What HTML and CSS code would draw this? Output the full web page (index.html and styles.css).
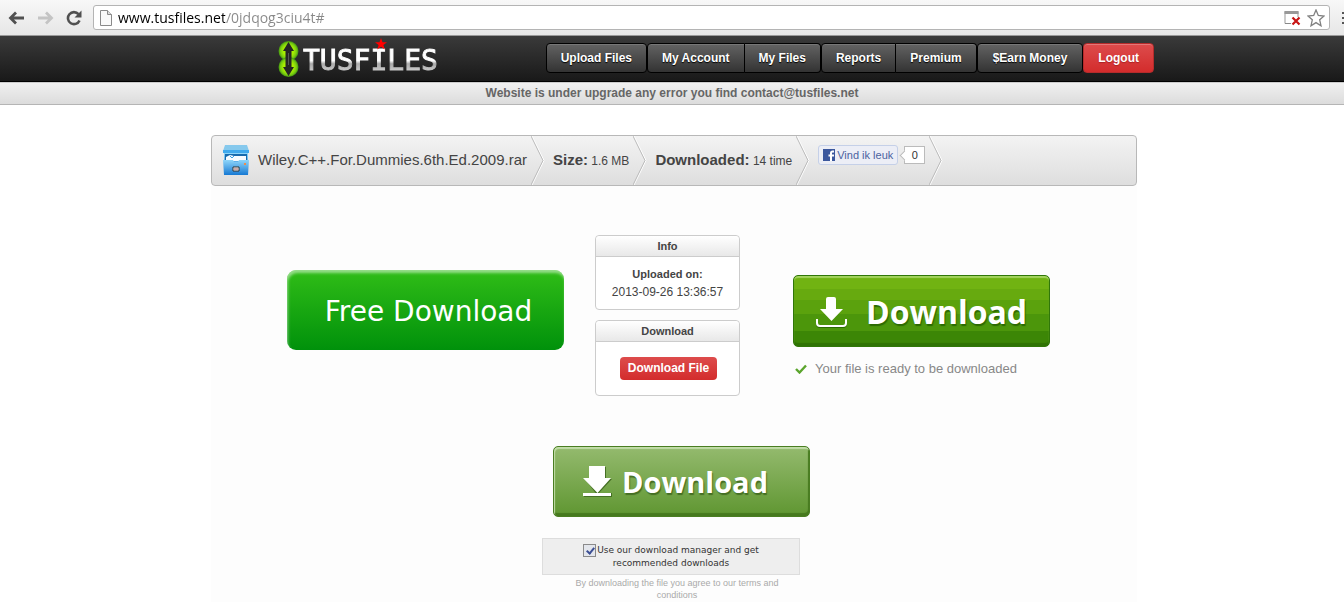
FILE: index.html
```html
<!DOCTYPE html>
<html lang="en">
<head>
  <meta charset="utf-8">
  <title>TusFiles - Download</title>
  <link rel="stylesheet" href="styles.css">
</head>
<body>
  <div class="toolbar">
    <button class="tool" aria-label="Back">
      <svg width="17" height="14" viewBox="0 0 17 14"><path d="M16 7H3M8 1.500L2.500 7L8 12.500" fill="none" stroke="#505050" stroke-width="2.800"/></svg>
    </button>
    <button class="tool" aria-label="Forward" disabled>
      <svg width="17" height="14" viewBox="0 0 17 14"><path d="M1 7H14M9 1.500L14.500 7L9 12.500" fill="none" stroke="#c4c4c4" stroke-width="2.800"/></svg>
    </button>
    <button class="tool" aria-label="Reload">
      <svg width="17" height="16" viewBox="0 0 17 16"><path d="M13.500 10.500A6 6 0 1 1 12.500 4.200" fill="none" stroke="#505050" stroke-width="2.600"/><path d="M15.500 0.500V7.500H8.500Z" fill="#505050"/></svg>
    </button>
    <div class="address">
      <svg width="12" height="16" viewBox="0 0 12 16"><path d="M.5.500H7.500L11.500 4.500V15.500H.5Z" fill="#fafafa" stroke="#8a8a8a"/><path d="M7.500.500V4.500H11.500" fill="#ddd" stroke="#8a8a8a"/></svg>
      <input type="text" class="url" aria-label="Address" value="www.tusfiles.net/0jdqog3ciu4t#">
      <svg width="17" height="16" viewBox="0 0 17 16"><path d="M1 13.500V1.500H14V7" fill="none" stroke="#999"/><path d="M.5 1H14.500V4H.5Z" fill="#999"/><path d="M1 13.500H7" stroke="#888"/><path d="M8.500 7.500L15.500 14.500M15.500 7.500L8.500 14.500" stroke="#c81414" stroke-width="2.200"/></svg>
      <svg width="18" height="18" viewBox="0 0 18 18"><path d="M9 1L11.300 6.500L17 7L12.700 10.800L14 16.800L9 13.600L4 16.800L5.300 10.800L1 7L6.700 6.500Z" fill="#fff" stroke="#808080" stroke-width="1.300"/></svg>
    </div>
    <svg class="menu-icon" width="2" height="14" viewBox="0 0 2 14"><path d="M0 2H4M0 7H4M0 12H4" stroke="#555" stroke-width="2"/></svg>
  </div>

  <header class="header">
    <div class="header-inner">
      <a class="logo" href="#">
        <svg width="21" height="36" viewBox="0 0 21 36">
          <defs>
            <radialGradient id="green"><stop offset="0.500" stop-color="#a8f000"/><stop offset="0.800" stop-color="#79cc10"/><stop offset="1" stop-color="#3f9012"/></radialGradient>
          </defs>
          <circle cx="10.500" cy="10" r="10" fill="url(#green)"/>
          <circle cx="10.500" cy="26" r="10" fill="url(#green)"/>
          <path d="M10.500 1L16 10H13.500V26H16L10.500 35L5 26H7.500V10H5Z" fill="#252525"/>
          <path d="M10.500 12V24" stroke="#555"/>
        </svg>
        <span class="logo-text">TUSFILES</span>
        <svg class="star" width="12" height="12" viewBox="0 0 12 12"><path d="M6 0L7.500 4.200H12L8.400 6.900L9.800 11.500L6 8.800L2.200 11.500L3.600 6.900L0 4.200H4.500Z" fill="#f00"/></svg>
      </a>
      <nav class="nav">
        <a href="#" class="round">Upload Files</a>
        <a href="#" class="round-left">My Account</a>
        <a href="#" class="round-right">My Files</a>
        <a href="#" class="round-left">Reports</a>
        <a href="#" class="round-right">Premium</a>
        <a href="#" class="round">$Earn Money</a>
        <a href="#" class="round logout">Logout</a>
      </nav>
    </div>
  </header>
  <div class="notice">Website is under upgrade any error you find contact@tusfiles.net</div>

  <main class="page">
    <div class="file-bar">
      <svg class="file-icon" width="28" height="32" viewBox="0 0 28 32">
        <defs>
          <linearGradient id="blue" x2="0" y2="1"><stop offset="0" stop-color="#8fd6fa"/><stop offset="1" stop-color="#1679d3"/></linearGradient>
        </defs>
        <path d="M3 1H25L27 7H1Z" fill="#86c9ed"/>
        <path d="M1 6H27V9H1Z" fill="#3fa9ed"/>
        <path d="M2 9H26V30H2Z" fill="url(#blue)"/>
        <path d="M3 10H25V16H3Z" fill="#166aae"/>
        <path d="M4 13L8 11L12 12L17 12H24V17H4Z" fill="#f6fbff"/>
        <path d="M8 12L10 14L12 12" fill="none" stroke="#38a1e8"/>
        <path d="M1 16H11L12 18H16L17 16H27L26 31H2Z" fill="url(#blue)"/>
        <path d="M11 23H17V27H11Z" fill="#fff" stroke="#333"/>
        <path d="M12 25H16" stroke="#955"/>
        <path d="M23 19V21" stroke="#ef8b4c" stroke-width="2"/>
      </svg>
      <span class="file-name">Wiley.C++.For.Dummies.6th.Ed.2009.rar</span>
      <svg class="chevron" viewBox="0 0 14 49"><path d="M1 0L13 24.500L1 49" fill="none" stroke="#fff"/><path d="M0 0L12 24.500L0 49" fill="none" stroke="#bbb"/></svg>
      <span><b>Size:</b> 1.6 MB</span>
      <svg class="chevron" viewBox="0 0 14 49"><path d="M1 0L13 24.500L1 49" fill="none" stroke="#fff"/><path d="M0 0L12 24.500L0 49" fill="none" stroke="#bbb"/></svg>
      <span><b>Downloaded:</b> 14 time</span>
      <svg class="chevron" viewBox="0 0 14 49"><path d="M1 0L13 24.500L1 49" fill="none" stroke="#fff"/><path d="M0 0L12 24.500L0 49" fill="none" stroke="#bbb"/></svg>
      <div class="like">
        <button class="like-btn">
          <svg width="12" height="12" viewBox="0 0 12 12"><path d="M0 0H12V12H0Z" fill="#3b579d"/><path d="M11 2.500H9.500Q8 2.500 8 4V12M5.500 6.500H11" fill="none" stroke="#fff" stroke-width="2"/></svg>
          Vind ik leuk
        </button>
        <span class="like-count">0</span>
      </div>
      <svg class="chevron" viewBox="0 0 14 49"><path d="M1 0L13 24.500L1 49" fill="none" stroke="#fff"/><path d="M0 0L12 24.500L0 49" fill="none" stroke="#bbb"/></svg>
    </div>

    <div class="downloads">
      <button class="free-btn">Free Download</button>
      <div class="boxes">
        <section class="box">
          <h2>Info</h2>
          <p class="uploaded"><b>Uploaded on:</b><br>2013-09-26 13:36:57</p>
        </section>
        <section class="box">
          <h2>Download</h2>
          <button class="file-btn">Download File</button>
        </section>
      </div>
      <div class="ready">
        <button class="ad-btn ad-striped">
          <svg width="32" height="33" viewBox="0 0 32 33"><path d="M10 4Q10 2 12 2H18Q20 2 20 4V14H27L15.500 26L4 14H10Z" fill="#fff"/><path d="M1 25V29Q1 32 4 32H27Q30 32 30 29V25" fill="none" stroke="#2c6a03" stroke-width="2"/><path d="M1 24V28Q1 31 4 31H27Q30 31 30 28V24" fill="none" stroke="#fff" stroke-width="2"/></svg>
          Download
        </button>
        <p class="ready-text">
          <svg width="12" height="10" viewBox="0 0 12 10"><path d="M1 5L4.500 8.500L11 1.500" fill="none" stroke="#5ba52d" stroke-width="2.400"/></svg>
          Your file is ready to be downloaded
        </p>
      </div>
    </div>

    <div class="manager">
      <button class="ad-btn ad-soft">
        <svg width="29" height="31" viewBox="0 0 29 31"><path d="M8 1H23V13H29L16 27H29V31H1V29H14L2 13H8Z" fill="#456f24"/><path d="M6 0H22V12H28L14.500 27L0 12H6Z" fill="#fff"/><path d="M0 27H28V30H0Z" fill="#fff"/></svg>
        Download
      </button>
      <div class="agree">
        <input type="checkbox" id="manager" checked><label for="manager">Use our download manager and get recommended downloads</label>
      </div>
      <p class="terms">By downloading the file you agree to our terms and conditions</p>
    </div>
  </main>
</body>
</html>
```

FILE: styles.css
```css
* {
  box-sizing: border-box;
}

body {
  margin: 0;
  font-family: "Liberation Sans", Arial, sans-serif;
  font-size: 12px;
  color: #444;
  background-color: #fff;
}

button {
  font-family: inherit;
  cursor: pointer;
}

svg {
  flex-shrink: 0;
}

h2,
p {
  margin: 0;
}

/* browser bar */
.toolbar {
  display: flex;
  align-items: center;
  gap: 12px;
  height: 36px;
  padding: 0 0 0 8px;
  background: linear-gradient(#f8f8f8, #e6e6e6);
  border-bottom: 1px solid #999;
}

.tool {
  display: flex;
  padding: 0;
  border: none;
  background: none;
}

.address {
  display: flex;
  flex: 1;
  align-items: center;
  gap: 6px;
  height: 25px;
  margin-left: -2px;
  padding: 0 4px 0 6px;
  background-color: #fff;
  border: 1px solid #b4b4b4;
  border-radius: 3px;
}

.url {
  flex: 1;
  min-width: 0;
  padding: 0;
  border: none;
  outline: none;
  font-family: "Open Sans", sans-serif;
  font-size: 14px;
  color: transparent;
  background: linear-gradient(90deg, #000 107px, #888 107px);
  -webkit-background-clip: text;
  background-clip: text;
}

/* header */
.header {
  background: linear-gradient(#3a3a3a, #191919);
  border-bottom: 1px solid #000;
}

.header-inner {
  display: flex;
  justify-content: space-between;
  align-items: center;
  max-width: 964px;
  height: 45px;
  margin: 0 auto;
  padding-left: 88px;
}

.logo {
  position: relative;
  display: flex;
  align-items: center;
  gap: 4px;
  text-decoration: none;
}

.logo-text {
  padding-top: 4px;
  font-family: "DejaVu Sans Mono", monospace;
  font-size: 28px;
  line-height: 36px;
  color: transparent;
  background: linear-gradient(#fff 54%, #aaa 62%, #ccc 80%);
  -webkit-background-clip: text;
  background-clip: text;
  -webkit-text-stroke: 1px transparent;
}

.star {
  position: absolute;
  left: 97px;
  top: -1px;
}

.nav {
  display: flex;
  margin-bottom: 2px;
}

.nav a {
  padding: 0 14px;
  border: 1px solid #000;
  font-weight: bold;
  line-height: 28px;
  color: #fff;
  text-decoration: none;
  text-shadow: 0 1px 1px #000;
  background: linear-gradient(#636363, #333);
  box-shadow: inset 0 1px 0 #777;
}

.nav .round {
  border-radius: 4px;
}

.nav .round-left {
  border-radius: 4px 0 0 4px;
}

.nav .round-right {
  border-left: none;
  border-radius: 0 4px 4px 0;
}

.nav .round:nth-child(6) {
  padding: 0 15px;
}

.nav .logout {
  border-color: #b52b2b;
  text-shadow: 0 1px 1px #a22;
  background: linear-gradient(#dd4c4c, #d32c2c);
  box-shadow: inset 0 1px 0 #e47777;
}

.notice {
  height: 23px;
  border-top: 1px solid #ccc;
  border-bottom: 1px solid #b5b5b5;
  font-size: 12px;
  font-weight: bold;
  line-height: 21px;
  text-align: center;
  color: #666;
  background: linear-gradient(#f0f0f0, #dcdcdc);
}

/* page */
.page {
  max-width: 930px;
  margin: 30px auto 0;
  padding-left: 4px;
}

.file-bar {
  display: flex;
  align-items: center;
  gap: 8px;
  height: 51px;
  padding-left: 10px;
  border: 1px solid #b8b8b8;
  border-radius: 4px;
  background: linear-gradient(#f3f3f3, #dedede);
}

.file-icon,
.file-bar > span {
  margin-bottom: 2px;
}

.file-name,
.file-bar b {
  font-size: 15px;
}

.file-bar span + .chevron {
  margin-left: -4px;
}

.chevron {
  width: 14px;
  height: 49px;
}

.like {
  display: flex;
  align-items: center;
  gap: 6px;
  margin: 0 -4px 12px 0;
}

.like-btn {
  display: flex;
  align-items: center;
  gap: 2px;
  height: 20px;
  padding: 0 4px;
  border: 1px solid #c5d0e8;
  border-radius: 3px;
  font-size: 11px;
  color: #4b62a0;
  background-color: #eceef6;
}

.like-count {
  position: relative;
  width: 21px;
  border: 1px solid #bbb;
  font-size: 11px;
  line-height: 16px;
  text-align: center;
  color: #333;
  background-color: #fff;
}

.like-count::before {
  content: "";
  position: absolute;
  left: -4px;
  top: 5px;
  width: 6px;
  height: 6px;
  border: 1px solid #bbb;
  border-width: 0 0 1px 1px;
  background-color: #fff;
  transform: rotate(45deg);
}

.downloads {
  display: flex;
  align-items: flex-start;
  padding: 49px 0 50px 76px;
  background-color: #fdfdfd;
}

.free-btn {
  width: 277px;
  height: 80px;
  margin-top: 35px;
  padding: 2px 0 0 6px;
  border: none;
  border-radius: 9px;
  font-family: "DejaVu Sans", Verdana, sans-serif;
  font-size: 28px;
  color: #fff;
  background: linear-gradient(#30bd17, #00910b);
  box-shadow: inset 1px 3px 3px rgba(255, 255, 255, 0.5);
}

.boxes {
  display: flex;
  flex-direction: column;
  gap: 10px;
  width: 145px;
  margin: 0 53px 0 31px;
}

.box {
  height: 75px;
  border: 1px solid #ccc;
  border-radius: 4px;
  text-align: center;
  background-color: #fff;
}

.box + .box {
  height: 76px;
}

.box h2 {
  border-bottom: 1px solid #ccc;
  border-radius: 4px 4px 0 0;
  font-size: 11px;
  line-height: 20px;
  background: linear-gradient(#fff, #e8e8e8);
}

.uploaded {
  padding-top: 8px;
  line-height: 18px;
}

.uploaded b {
  font-size: 11px;
}

.file-btn {
  height: 23px;
  margin: 15px 0 0 2px;
  padding: 0 8px 2px;
  border: none;
  border-radius: 4px;
  font-size: 12px;
  font-weight: bold;
  color: #fff;
  background: linear-gradient(#dd4c4c, #d32c2c);
}

.ready {
  margin-top: 40px;
}

.ad-btn {
  display: flex;
  align-items: center;
  width: 257px;
  height: 72px;
  border-radius: 5px;
  font-family: "Open Sans", "Noto Sans", sans-serif;
  font-weight: bold;
  color: #fff;
}

.ad-striped {
  gap: 18px;
  padding: 0 0 0 22px;
  border: 1px solid #307708;
  font-size: 32px;
  text-shadow: 1px 2px 1px #2c6a03;
  background: linear-gradient(#71b312 0 13px, #67aa0f 13px 24px, #5ba20d 24px 38px, #4c960b 38px 55px, #3c8606 55px);
  box-shadow: inset 0 2px 1px #a4d35f, inset 0 -3px 1px #2f7304;
}

.ad-soft {
  gap: 10px;
  height: 71px;
  margin-left: 11px;
  padding: 0 0 0 29px;
  border: 1px solid #4a7e22;
  font-size: 29px;
  line-height: 36px;
  text-shadow: 1px 2px 1px #456f24;
  background: linear-gradient(#94ba6e, #5f9631);
  box-shadow: inset 1px 2px 1px #c2dda9, inset -1px -3px 1px #46791e;
}

.ready-text {
  display: flex;
  align-items: center;
  gap: 8px;
  padding: 13px 0 0 2px;
  font-size: 13px;
  line-height: 17px;
  color: #888;
}

.manager {
  padding: 0 337px 0 331px;
  background-color: #fdfdfd;
}

.agree {
  margin-top: 21px;
  padding: 5px 32px 4px;
  border: 1px solid #ddd;
  font-family: "DejaVu Sans", Verdana, sans-serif;
  font-size: 9px;
  line-height: 13px;
  text-align: center;
  color: #333;
  background-color: #eee;
}

.agree input {
  appearance: none;
  position: relative;
  width: 13px;
  height: 13px;
  margin: 0 1px 0 0;
  border: 1px solid #8a8a8a;
  background-color: #e3e6ec;
  vertical-align: bottom;
}

.agree input:checked::after {
  content: "";
  position: absolute;
  left: 4px;
  top: 1px;
  width: 3px;
  height: 6px;
  border: solid #3c4f94;
  border-width: 0 2px 2px 0;
  transform: rotate(40deg);
}

.terms {
  padding: 2px 10px 1px 22px;
  font-size: 9px;
  line-height: 12px;
  text-align: center;
  color: #aaa;
}
```
